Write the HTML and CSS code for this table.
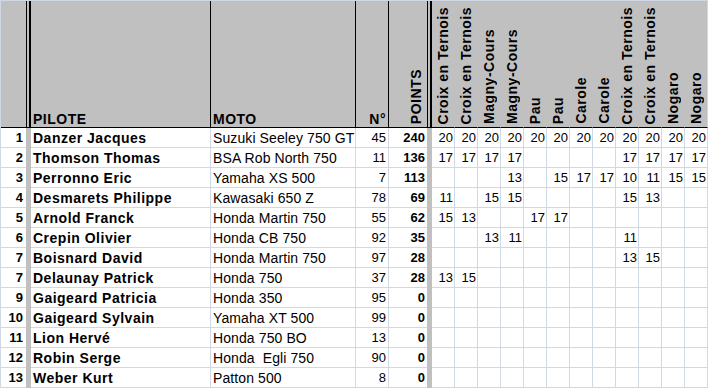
FILE: index.html
```html
<!DOCTYPE html>
<html lang="fr">
<head>
<meta charset="utf-8">
<title>Classement</title>
<link rel="stylesheet" href="styles.css">
</head>
<body>
<div class="sheet">
  <div class="row">
    <div class="c h hrn"></div><div class="c h hgs"></div>
    <div class="c h hl hsep">PILOTE</div>
    <div class="c h hl hsep">MOTO</div>
    <div class="c h hr hsep">N°</div>
    <div class="c h hv hpts hsep"><div class="vt">POINTS</div></div>
    <div class="c h hgs"></div>
    <div class="c h hv"><div class="vt">Croix en Ternois</div></div>
    <div class="c h hv"><div class="vt">Croix en Ternois</div></div>
    <div class="c h hv"><div class="vt">Magny-Cours</div></div>
    <div class="c h hv"><div class="vt">Magny-Cours</div></div>
    <div class="c h hv"><div class="vt">Pau</div></div>
    <div class="c h hv"><div class="vt">Pau</div></div>
    <div class="c h hv"><div class="vt">Carole</div></div>
    <div class="c h hv"><div class="vt">Carole</div></div>
    <div class="c h hv"><div class="vt">Croix en Ternois</div></div>
    <div class="c h hv"><div class="vt">Croix en Ternois</div></div>
    <div class="c h hv"><div class="vt">Nogaro</div></div>
    <div class="c h hv hlast"><div class="vt">Nogaro</div></div>
  </div>

  <div class="row">
    <div class="c rn">1</div><div class="c gs"></div><div class="c pil">Danzer Jacques</div><div class="c moto">Suzuki Seeley 750 GT</div><div class="c no">45</div><div class="c pts">240</div><div class="c gs"></div>
    <div class="c r">20</div><div class="c r">20</div><div class="c r">20</div><div class="c r">20</div><div class="c r">20</div><div class="c r">20</div><div class="c r">20</div><div class="c r">20</div><div class="c r">20</div><div class="c r">20</div><div class="c r">20</div><div class="c r">20</div>
  </div>
  <div class="row">
    <div class="c rn">2</div><div class="c gs"></div><div class="c pil">Thomson Thomas</div><div class="c moto">BSA Rob North 750</div><div class="c no">11</div><div class="c pts">136</div><div class="c gs"></div>
    <div class="c r">17</div><div class="c r">17</div><div class="c r">17</div><div class="c r">17</div><div class="c r"></div><div class="c r"></div><div class="c r"></div><div class="c r"></div><div class="c r">17</div><div class="c r">17</div><div class="c r">17</div><div class="c r">17</div>
  </div>
  <div class="row">
    <div class="c rn">3</div><div class="c gs"></div><div class="c pil">Perronno Eric</div><div class="c moto">Yamaha XS 500</div><div class="c no">7</div><div class="c pts">113</div><div class="c gs"></div>
    <div class="c r"></div><div class="c r"></div><div class="c r"></div><div class="c r">13</div><div class="c r"></div><div class="c r">15</div><div class="c r">17</div><div class="c r">17</div><div class="c r">10</div><div class="c r">11</div><div class="c r">15</div><div class="c r">15</div>
  </div>
  <div class="row">
    <div class="c rn">4</div><div class="c gs"></div><div class="c pil">Desmarets Philippe</div><div class="c moto">Kawasaki 650 Z</div><div class="c no">78</div><div class="c pts">69</div><div class="c gs"></div>
    <div class="c r">11</div><div class="c r"></div><div class="c r">15</div><div class="c r">15</div><div class="c r"></div><div class="c r"></div><div class="c r"></div><div class="c r"></div><div class="c r">15</div><div class="c r">13</div><div class="c r"></div><div class="c r"></div>
  </div>
  <div class="row">
    <div class="c rn">5</div><div class="c gs"></div><div class="c pil">Arnold Franck</div><div class="c moto">Honda Martin 750</div><div class="c no">55</div><div class="c pts">62</div><div class="c gs"></div>
    <div class="c r">15</div><div class="c r">13</div><div class="c r"></div><div class="c r"></div><div class="c r">17</div><div class="c r">17</div><div class="c r"></div><div class="c r"></div><div class="c r"></div><div class="c r"></div><div class="c r"></div><div class="c r"></div>
  </div>
  <div class="row">
    <div class="c rn">6</div><div class="c gs"></div><div class="c pil">Crepin Olivier</div><div class="c moto">Honda CB 750</div><div class="c no">92</div><div class="c pts">35</div><div class="c gs"></div>
    <div class="c r"></div><div class="c r"></div><div class="c r">13</div><div class="c r">11</div><div class="c r"></div><div class="c r"></div><div class="c r"></div><div class="c r"></div><div class="c r">11</div><div class="c r"></div><div class="c r"></div><div class="c r"></div>
  </div>
  <div class="row">
    <div class="c rn">7</div><div class="c gs"></div><div class="c pil">Boisnard David</div><div class="c moto">Honda Martin 750</div><div class="c no">97</div><div class="c pts">28</div><div class="c gs"></div>
    <div class="c r"></div><div class="c r"></div><div class="c r"></div><div class="c r"></div><div class="c r"></div><div class="c r"></div><div class="c r"></div><div class="c r"></div><div class="c r">13</div><div class="c r">15</div><div class="c r"></div><div class="c r"></div>
  </div>
  <div class="row">
    <div class="c rn">7</div><div class="c gs"></div><div class="c pil">Delaunay Patrick</div><div class="c moto">Honda 750</div><div class="c no">37</div><div class="c pts">28</div><div class="c gs"></div>
    <div class="c r">13</div><div class="c r">15</div><div class="c r"></div><div class="c r"></div><div class="c r"></div><div class="c r"></div><div class="c r"></div><div class="c r"></div><div class="c r"></div><div class="c r"></div><div class="c r"></div><div class="c r"></div>
  </div>
  <div class="row">
    <div class="c rn">9</div><div class="c gs"></div><div class="c pil">Gaigeard Patricia</div><div class="c moto">Honda 350</div><div class="c no">95</div><div class="c pts">0</div><div class="c gs"></div>
    <div class="c r"></div><div class="c r"></div><div class="c r"></div><div class="c r"></div><div class="c r"></div><div class="c r"></div><div class="c r"></div><div class="c r"></div><div class="c r"></div><div class="c r"></div><div class="c r"></div><div class="c r"></div>
  </div>
  <div class="row">
    <div class="c rn">10</div><div class="c gs"></div><div class="c pil">Gaigeard Sylvain</div><div class="c moto">Yamaha XT 500</div><div class="c no">99</div><div class="c pts">0</div><div class="c gs"></div>
    <div class="c r"></div><div class="c r"></div><div class="c r"></div><div class="c r"></div><div class="c r"></div><div class="c r"></div><div class="c r"></div><div class="c r"></div><div class="c r"></div><div class="c r"></div><div class="c r"></div><div class="c r"></div>
  </div>
  <div class="row">
    <div class="c rn">11</div><div class="c gs"></div><div class="c pil">Lion Hervé</div><div class="c moto">Honda 750 BO</div><div class="c no">13</div><div class="c pts">0</div><div class="c gs"></div>
    <div class="c r"></div><div class="c r"></div><div class="c r"></div><div class="c r"></div><div class="c r"></div><div class="c r"></div><div class="c r"></div><div class="c r"></div><div class="c r"></div><div class="c r"></div><div class="c r"></div><div class="c r"></div>
  </div>
  <div class="row">
    <div class="c rn">12</div><div class="c gs"></div><div class="c pil">Robin Serge</div><div class="c moto">Honda  Egli 750</div><div class="c no">90</div><div class="c pts">0</div><div class="c gs"></div>
    <div class="c r"></div><div class="c r"></div><div class="c r"></div><div class="c r"></div><div class="c r"></div><div class="c r"></div><div class="c r"></div><div class="c r"></div><div class="c r"></div><div class="c r"></div><div class="c r"></div><div class="c r"></div>
  </div>
  <div class="row">
    <div class="c rn">13</div><div class="c gs"></div><div class="c pil">Weber Kurt</div><div class="c moto">Patton 500</div><div class="c no">8</div><div class="c pts">0</div><div class="c gs"></div>
    <div class="c r"></div><div class="c r"></div><div class="c r"></div><div class="c r"></div><div class="c r"></div><div class="c r"></div><div class="c r"></div><div class="c r"></div><div class="c r"></div><div class="c r"></div><div class="c r"></div><div class="c r"></div>
  </div>
</div>
</body>
</html>
```
FILE: styles.css
```css
html, body {
  margin: 0;
  padding: 0;
  background: #ffffff;
}

body {
  font-family: "Liberation Sans", Arial, sans-serif;
  font-size: 13px;
  color: #000000;
}

.sheet {
  display: grid;
  grid-template-columns: 26px 4px 180px 145px 33px 39px 4px repeat(12, 23px);
  grid-template-rows: 127px repeat(13, 20px);
  width: max-content;
  border-left: 1px solid #d0d7e5;
  border-top: 1px solid #d0d7e5;
}

.row {
  display: contents;
}

.c {
  box-sizing: border-box;
  border-right: 1px solid #d0d7e5;
  border-bottom: 1px solid #d0d7e5;
  padding-top: 1px;
  line-height: 18px;
  white-space: pre;
  overflow: hidden;
}

/* header row */
.h {
  background: #c0c0c0;
  border-bottom-color: #000000;
  border-right-color: #c0c0c0;
  display: flex;
  align-items: flex-end;
  padding-top: 0;
  line-height: 16px;
  font-size: 14px;
  font-weight: bold;
  letter-spacing: 0.5px;
}

.hrn,
.hsep {
  border-right-color: #000000;
}

.hgs {
  border-right: 2px solid #000000;
}

.hl {
  padding-left: 2px;
}

.hr {
  justify-content: flex-end;
  padding-right: 2px;
}

.hv {
  justify-content: center;
}

.hpts {
  justify-content: flex-end;
}

.hlast {
  border-right-color: #d0d7e5;
}

.vt {
  writing-mode: vertical-rl;
  transform: rotate(180deg);
  width: 22px;
  line-height: 22px;
  padding-top: 3px;
  white-space: nowrap;
}

/* data rows */
.rn {
  text-align: right;
  padding-right: 3px;
  font-weight: bold;
  border-right-color: #c0c0c0;
}

.gs {
  background: #c0c0c0;
  border-right-color: #c0c0c0;
  border-bottom-color: #c0c0c0;
}

.pil {
  padding-left: 2px;
  font-size: 14px;
  font-weight: bold;
  letter-spacing: 0.5px;
}

.moto {
  padding-left: 2px;
  font-size: 14px;
  letter-spacing: 0.1px;
}

.no {
  text-align: right;
  padding-right: 2px;
}

.pts {
  text-align: right;
  padding-right: 2px;
  font-weight: bold;
  border-right-color: #c0c0c0;
}

.r {
  text-align: right;
  padding-right: 1px;
}
```
